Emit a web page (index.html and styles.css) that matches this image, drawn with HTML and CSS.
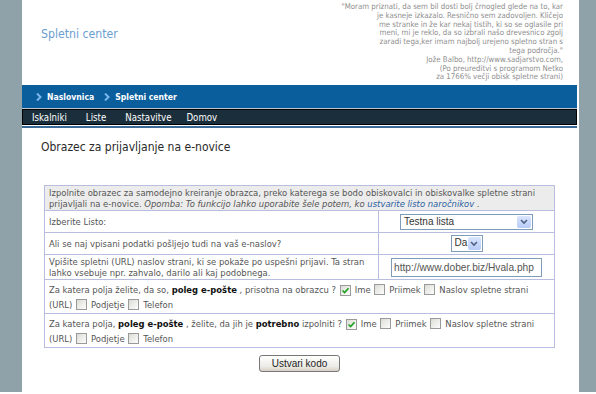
FILE: index.html
```html
<!DOCTYPE html>
<html lang="sl">
<head>
<meta charset="utf-8">
<title>Spletni center</title>
<link rel="stylesheet" href="styles.css">
</head>
<body>
<div class="page">
  <div class="main">
    <header class="top">
      <div class="logo">Spletni center</div>
      <div class="quote">"Moram priznati, da sem bil dosti bolj črnogled glede na to, kar<br>je kasneje izkazalo. Resnično sem zadovoljen. Kličejo<br>me stranke in že kar nekaj tistih, ki so se oglasile pri<br>meni, mi je reklo, da so izbrali našo drevesnico zgolj<br>zaradi tega,ker imam najbolj urejeno spletno stran s<br>tega področja."<br>Jože Balbo, http://www.sadjarstvo.com,<br>(Po preureditvi s programom Netko<br>za 1766% večji obisk spletne strani)</div>
    </header>
    <div class="crumbs">
      <span class="crumb"><svg class="chev" viewBox="0 0 6 8" width="6" height="8"><path d="M1 0.5 L4.5 4 L1 7.5" fill="none" stroke="#79b6ee" stroke-width="2"/></svg>Naslovnica</span>
      <span class="crumb"><svg class="chev" viewBox="0 0 6 8" width="6" height="8"><path d="M1 0.5 L4.5 4 L1 7.5" fill="none" stroke="#79b6ee" stroke-width="2"/></svg>Spletni center</span>
    </div>
    <nav class="nav">
      <a class="nav-item">Iskalniki</a>
      <a class="nav-item">Liste</a>
      <a class="nav-item">Nastavitve</a>
      <a class="nav-item last">Domov</a>
    </nav>
    <div class="rule"></div>
    <h1 class="title">Obrazec za prijavljanje na e-novice</h1>
    <table class="form">
      <tr class="intro">
        <td colspan="2">Izpolnite obrazec za samodejno kreiranje obrazca, preko katerega se bodo obiskovalci in obiskovalke spletne strani<br>prijavljali na e-novice. <i>Opomba: To funkcijo lahko uporabite šele potem, ko <a class="link">ustvarite listo naročnikov</a> .</i></td>
      </tr>
      <tr class="r1">
        <td class="label">Izberite Listo:</td>
        <td class="ctrl"><span class="select wide"><span class="sel-val">Testna lista</span><span class="sel-btn"><svg viewBox="0 0 8 6" width="8" height="6"><path d="M1 1 L4 4 L7 1" fill="none" stroke="#4d6185" stroke-width="1.6"/></svg></span></span></td>
      </tr>
      <tr class="r2">
        <td class="label">Ali se naj vpisani podatki pošljejo tudi na vaš e-naslov?</td>
        <td class="ctrl"><span class="select small"><span class="sel-val">Da</span><span class="sel-btn"><svg viewBox="0 0 8 6" width="8" height="6"><path d="M1 1 L4 4 L7 1" fill="none" stroke="#4d6185" stroke-width="1.6"/></svg></span></span></td>
      </tr>
      <tr class="r3">
        <td class="label">Vpišite spletni (URL) naslov strani, ki se pokaže po uspešni prijavi. Ta stran<br>lahko vsebuje npr. zahvalo, darilo ali kaj podobnega.</td>
        <td class="ctrl"><span class="input">http://www.dober.biz/Hvala.php</span></td>
      </tr>
      <tr class="r4">
        <td colspan="2" class="fields">Za katera polja želite, da so, <b>poleg e-pošte</b> , prisotna na obrazcu ? <span class="cb on"><svg viewBox="0 0 9 9" width="9" height="9"><path d="M1.5 4.5 L3.6 6.6 L7.5 2.2" fill="none" stroke="#21a121" stroke-width="1.7"/></svg></span>Ime <span class="cb"></span>Priimek <span class="cb"></span>Naslov spletne strani<br>(URL) <span class="cb"></span>Podjetje <span class="cb"></span>Telefon</td>
      </tr>
      <tr class="r5">
        <td colspan="2" class="fields">Za katera polja, <b>poleg e-pošte</b> , želite, da jih je <b>potrebno</b> izpolniti ? <span class="cb on"><svg viewBox="0 0 9 9" width="9" height="9"><path d="M1.5 4.5 L3.6 6.6 L7.5 2.2" fill="none" stroke="#21a121" stroke-width="1.7"/></svg></span>Ime <span class="cb"></span>Priimek <span class="cb"></span>Naslov spletne strani<br>(URL) <span class="cb"></span>Podjetje <span class="cb"></span>Telefon</td>
      </tr>
    </table>
    <div class="actions"><span class="button">Ustvari kodo</span></div>
  </div>
</div>
</body>
</html>
```
FILE: styles.css
```css
html, body {
  margin: 0;
  background: #fff;
}
body {
  font-family: "DejaVu Sans Condensed", "DejaVu Sans", Verdana, sans-serif;
  font-stretch: condensed;
}
.page {
  height: 392px;
  background: #8fa2aa;
  padding: 0 17px 0 22px;
  box-sizing: border-box;
}
.main {
  background: #fff;
  height: 100%;
}
.top {
  height: 85px;
  display: flex;
  justify-content: space-between;
}
.logo {
  padding: 27px 0 0 19px;
  font-size: 12.2px;
  line-height: 14px;
  color: #6b9ed0;
}
.quote {
  padding: 3px 16px 0 0;
  text-align: right;
  font-size: 7.8px;
  line-height: 8.8px;
  color: #8e8e8e;
}
.crumbs {
  height: 23px;
  margin-right: 2px;
  background: #0b5e9c;
  border-bottom: 1px solid #b9c6cf;
  display: flex;
  align-items: center;
  padding-left: 14px;
  gap: 10px;
}
.crumb {
  display: flex;
  align-items: center;
  gap: 5px;
  color: #fff;
  font-weight: bold;
  font-size: 8.6px;
}
.nav {
  height: 14px;
  margin-right: 2px;
  background: #1b2e3b;
  border: 1px solid #000;
  display: flex;
  align-items: center;
  padding-left: 9px;
  gap: 19px;
}
.nav-item {
  color: #fff;
  font-size: 9.6px;
}
.nav-item.last {
  margin-left: -4px;
}
.rule {
  height: 2px;
  margin: 1px 2px 0 0;
  background: #3c6a96;
}
.title {
  margin: 12px 0 0 19px;
  font-size: 12px;
  line-height: 14px;
  font-weight: normal;
  color: #2a2a2a;
}
.form {
  margin: 31px 0 0 22px;
  width: 511px;
  border-collapse: collapse;
  border: 1px solid #b3b7db;
  font-size: 9.4px;
  color: #555;
}
.form td {
  border: 1px solid #b9bddf;
  padding: 1px 4px;
  line-height: 11px;
  vertical-align: middle;
}
.intro td {
  background: #ececec;
}
.link {
  color: #2d5fa0;
}
.label {
  width: 325px;
}
.r1 td, .r2 td {
  height: 19px;
}
.r3 td {
  height: 20px;
}
.ctrl {
  text-align: center;
}
.select {
  display: inline-flex;
  vertical-align: middle;
  height: 16px;
  box-sizing: border-box;
  border: 1px solid #7f9db9;
  background: #fff;
  font-family: "Liberation Sans", Arial, sans-serif;
  font-stretch: normal;
  font-size: 10px;
  color: #333;
  text-align: left;
}
.select.wide { width: 133px; }
.select.small { width: 32px; height: 17px; }
.sel-val {
  flex: 1;
  padding-left: 3px;
  line-height: 14px;
}
.sel-btn {
  width: 14px;
  margin: 1px;
  border-radius: 2px;
  background: linear-gradient(#dbe6fd, #b7cbf7);
  display: flex;
  align-items: center;
  justify-content: center;
}
.input {
  display: inline-block;
  vertical-align: middle;
  width: 151px;
  height: 19px;
  box-sizing: border-box;
  border: 1px solid #7f9db9;
  font-family: "Liberation Sans", Arial, sans-serif;
  font-stretch: normal;
  font-size: 10.2px;
  line-height: 17px;
  color: #555;
  text-align: left;
  padding-left: 2px;
}
.form td.fields {
  line-height: 15px;
  padding: 2px 4px 1px 4px;
}
.fields b {
  color: #111;
}
.cb {
  display: inline-flex;
  align-items: center;
  justify-content: center;
  width: 11px;
  height: 11px;
  box-sizing: border-box;
  border: 1px solid #9a9a9a;
  background: linear-gradient(135deg, #dcdcd6, #fdfdfd);
  vertical-align: -2px;
  margin: 0 4px 0 1px;
}
.actions {
  width: 511px;
  margin: 7px 0 0 22px;
  display: flex;
  justify-content: center;
}
.button {
  display: inline-block;
  width: 81px;
  height: 17px;
  box-sizing: border-box;
  border: 1px solid #777;
  border-radius: 3px;
  background: linear-gradient(#ffffff, #ecebe6 70%, #d6d0c5);
  font-family: "Liberation Sans", Arial, sans-serif;
  font-size: 10px;
  line-height: 15px;
  text-align: center;
  color: #222;
}
```
